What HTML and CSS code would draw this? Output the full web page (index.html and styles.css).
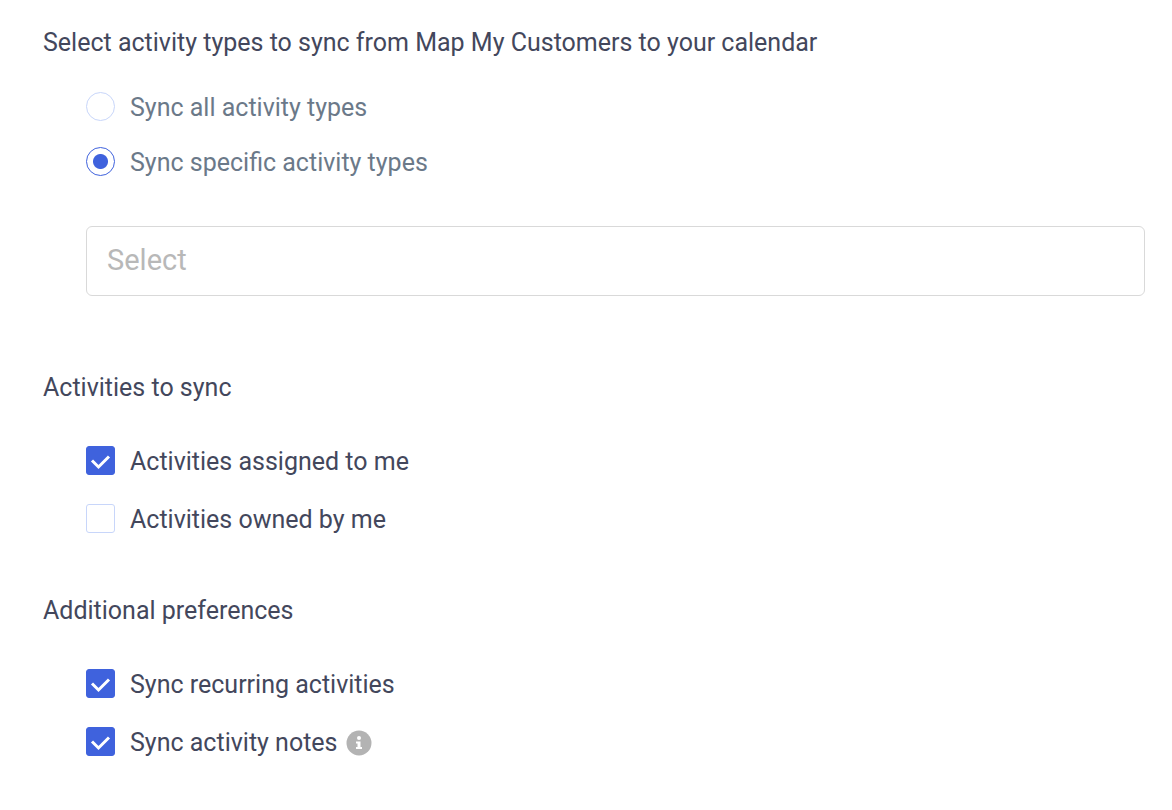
FILE: index.html
```html
<!DOCTYPE html>
<html lang="en">
<head>
<meta charset="utf-8">
<title>Calendar sync settings</title>
<link rel="stylesheet" href="styles.css">
</head>
<body>
<form class="settings">
  <fieldset class="group group-types">
    <legend class="heading">Select activity types to sync from Map My Customers to your calendar</legend>
    <div class="options options-radio">
      <label class="option muted"><input class="radio" type="radio" name="types"><span>Sync all activity types</span></label>
      <label class="option muted"><input class="radio" type="radio" name="types" checked><span>Sync specific activity types</span></label>
    </div>
    <input class="select" type="text" placeholder="Select" aria-label="Activity types">
  </fieldset>
  <fieldset class="group">
    <legend class="heading">Activities to sync</legend>
    <div class="options">
      <label class="option"><input class="check" type="checkbox" checked><span>Activities assigned to me</span></label>
      <label class="option"><input class="check" type="checkbox"><span>Activities owned by me</span></label>
    </div>
  </fieldset>
  <fieldset class="group">
    <legend class="heading">Additional preferences</legend>
    <div class="options">
      <label class="option"><input class="check" type="checkbox" checked><span>Sync recurring activities</span></label>
      <div class="with-info">
        <label class="option"><input class="check" type="checkbox" checked><span>Sync activity notes</span></label>
        <svg class="info" viewBox="0 0 26 26" role="img" aria-label="More information"><circle cx="13" cy="13" r="12.5" fill="#b3b3b3"/><circle cx="13" cy="8" r="2" fill="#fff"/><path d="M10 11.500h4.500v5.500h1.500v2h-6v-2h1.500v-3.500h-1.500z" fill="#fff"/></svg>
      </div>
    </div>
  </fieldset>
</form>
</body>
</html>
```
FILE: styles.css
```css
* { box-sizing: border-box; }
body {
  margin: 0;
  background: #fff;
  color: #43475c;
  font: 25px/30px Roboto, sans-serif;
}
.settings {
  display: flex;
  flex-direction: column;
  gap: 60px;
  padding: 28px 27px 27px 43px;
}
.group {
  min-width: 0;
  margin: 0;
  padding: 0;
  border: 0;
}
.group-types { margin-bottom: 17px; }
.heading { padding: 0; }
.options {
  display: flex;
  flex-direction: column;
  gap: 26px;
  padding: 43px 0 0 43px;
}
.options-radio { gap: 23px; padding-top: 34px; }
.option {
  display: flex;
  align-items: flex-start;
  align-self: flex-start;
  gap: 15px;
  line-height: 32px;
}
.muted { color: #6b7989; }
.radio, .check {
  appearance: none;
  flex: none;
  width: 29px;
  height: 29px;
  margin: 0;
  border: 1px solid #c8d6fa;
  background: #fff;
}
.radio { border-radius: 50%; }
.radio:checked {
  border-color: #3f62dd;
  background: radial-gradient(circle, #3f62dd 7px, #fff 8px);
}
.check { border-radius: 3px; }
.check:checked {
  border-color: #3f62dd;
  background: #3f62dd url("data:image/svg+xml,%3Csvg xmlns='http://www.w3.org/2000/svg' viewBox='0 0 29 29'%3E%3Cpath d='M6 14.500L12.500 21L23 10.500' fill='none' stroke='white' stroke-width='3'/%3E%3C/svg%3E") center / 29px 29px no-repeat;
}
.select {
  display: block;
  width: calc(100% - 43px);
  height: 70px;
  margin: 47px 0 0 43px;
  padding: 0 20px 2px;
  border: 1px solid #d9d9d9;
  border-radius: 6px;
  font: 29px/34px Roboto, sans-serif;
  color: inherit;
}
.select::placeholder { color: #b8b8b8; opacity: 1; }
.with-info { display: flex; align-items: center; gap: 8px; }
.info { width: 26px; height: 26px; }
```
